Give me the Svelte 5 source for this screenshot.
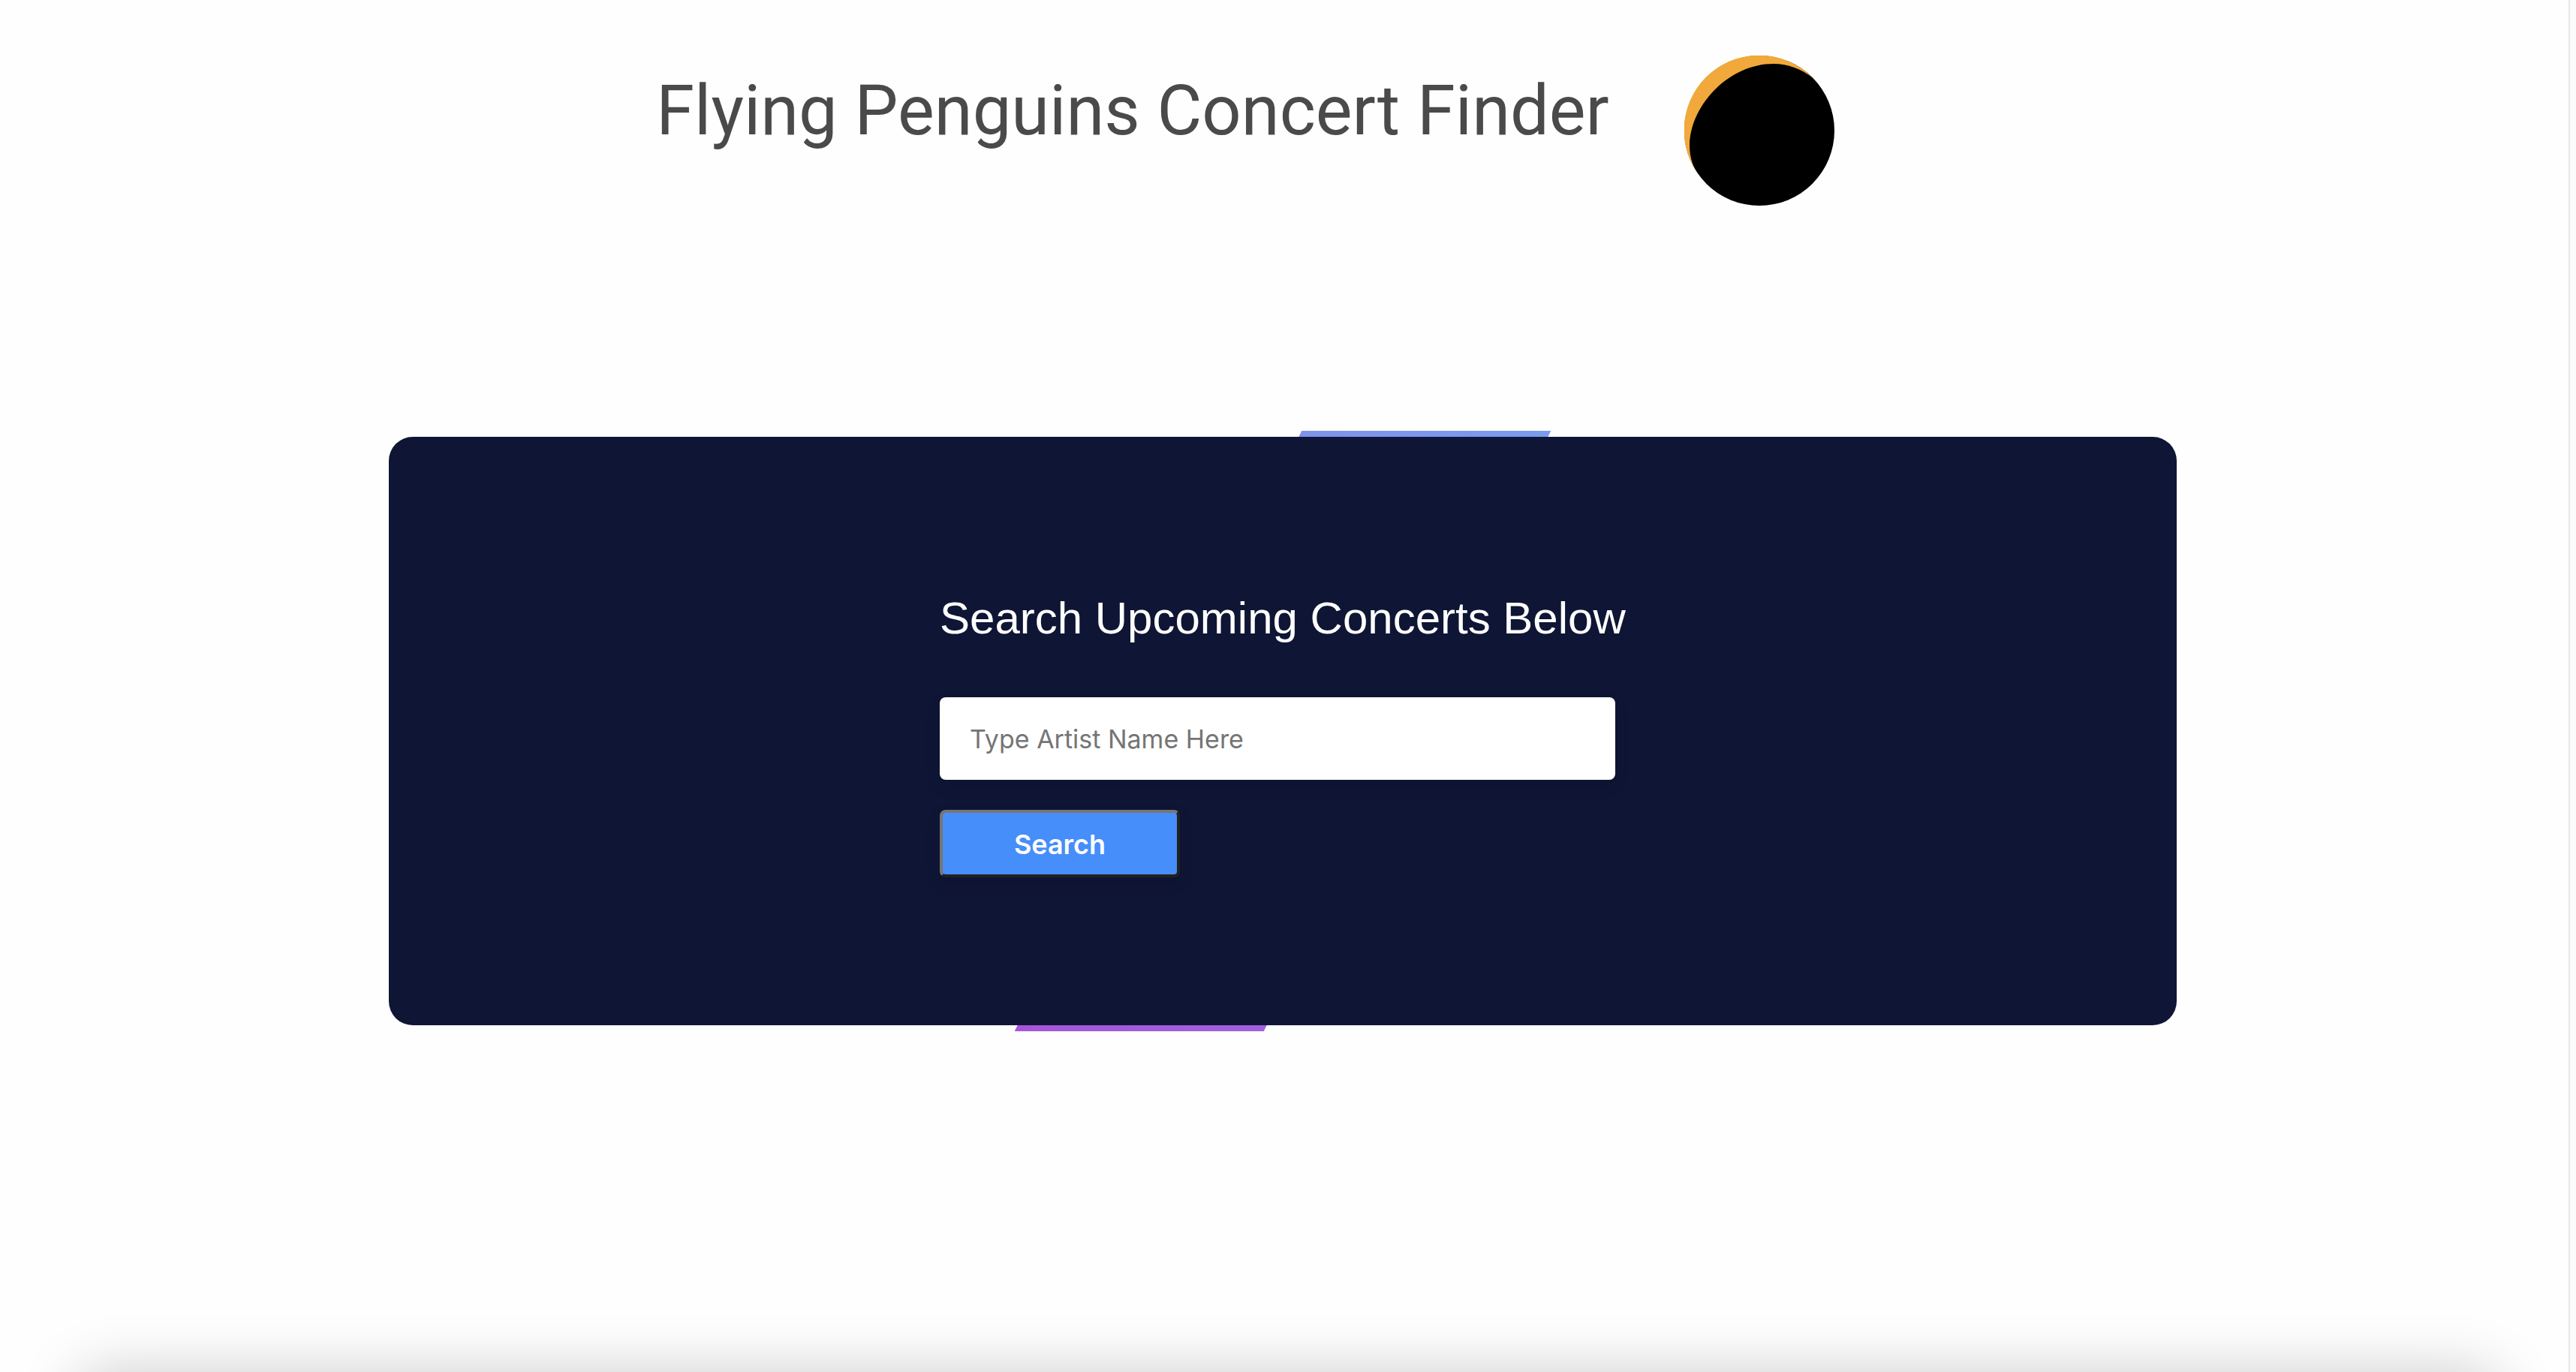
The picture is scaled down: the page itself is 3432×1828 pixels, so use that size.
<script>
  let artist = $state('');
</script>

<div class="page">
  <main>
    <header>
      <h1>Flying Penguins Concert Finder</h1>
      <svg class="eclipse" viewBox="0 0 200 200" aria-hidden="true">
        <circle cx="100" cy="100" r="100" fill="#000" />
        <path d="M17 156C10 145 7 132 7 120C7 68 58 11 119 11C138 11 156 18 171 29.6A100 100 0 0 0 17 156Z" fill="#f1a93b" />
      </svg>
    </header>

    <section class="card">
      <form onsubmit={(e) => e.preventDefault()}>
        <label for="artist">Search Upcoming Concerts Below</label>
        <input id="artist" type="text" placeholder="Type Artist Name Here" bind:value={artist} />
        <button type="submit">Search</button>
      </form>
    </section>
  </main>
  <div class="gutter"></div>
  <div class="shade"></div>
</div>

<style>
  :global(body) {
    background: #fefefe;
    overflow: hidden;
  }

  .page {
    position: relative;
    display: flex;
    min-height: 100vh;
    overflow: hidden;
    font-family: Inter, 'Liberation Sans', sans-serif;
  }

  main {
    flex: 1;
    display: flex;
    flex-direction: column;
    align-items: center;
    padding: 74px 4px 0 0;
  }

  .gutter {
    width: 8px;
    border-left: 2px solid #e8e8e8;
    background: #fafafa;
  }

  header {
    display: flex;
    align-items: flex-start;
    gap: 100px;
    padding-right: 100px;
  }

  h1 {
    margin: 18px 0 0;
    font-family: Roboto, sans-serif;
    font-size: 92px;
    line-height: 112px;
    font-weight: 400;
    color: #4a4a4a;
    white-space: nowrap;
  }

  .eclipse {
    width: 200px;
    height: 200px;
    flex: none;
  }

  .card {
    position: relative;
    box-sizing: border-box;
    display: flex;
    justify-content: center;
    width: 70%;
    max-width: 2382px;
    margin-top: 308px;
    padding: 202px 40px 197px;
    border-radius: 32px;
    background: #0f1535;
  }

  .card::before,
  .card::after {
    content: '';
    position: absolute;
    width: 336px;
    height: 8px;
    clip-path: polygon(4px 0, 100% 0, 332px 100%, 0 100%);
  }

  .card::before {
    right: 35%;
    bottom: 100%;
    background: linear-gradient(90deg, #8092ea, #7a9bee);
  }

  .card::after {
    left: 35%;
    top: 100%;
    background: linear-gradient(90deg, #a556da, #a061dd);
  }

  form {
    display: flex;
    flex-direction: column;
    align-items: flex-start;
    width: 914px;
  }

  label {
    font-family: 'Liberation Sans', Arial, sans-serif;
    font-size: 60px;
    line-height: 80px;
    color: #fff;
    white-space: nowrap;
  }

  input {
    box-sizing: border-box;
    width: 900px;
    height: 110px;
    margin: 65px 0 40px;
    padding: 0 40px;
    border: 0;
    border-radius: 8px;
    background: #fff;
    box-shadow: 0 8px 20px rgba(0, 0, 0, 0.12);
    font-family: inherit;
    font-size: 34px;
    color: #222;
  }

  input::placeholder {
    color: #757575;
    opacity: 1;
  }

  button {
    box-sizing: border-box;
    width: 320px;
    height: 90px;
    padding: 2px 0 0;
    border: 4px solid;
    border-color: #767676 #212121 #212121 #767676;
    border-radius: 8px;
    background: #468ef9;
    box-shadow: 0 8px 20px rgba(0, 0, 0, 0.12);
    font-family: inherit;
    font-size: 36px;
    font-weight: 600;
    color: #fff;
  }

  /* Soft shadow rising from below the fold */
  .shade {
    position: absolute;
    top: 100%;
    left: 100px;
    right: 100px;
    height: 100px;
    border-radius: 40px;
    box-shadow: 0 0 80px rgba(0, 0, 0, 0.2);
  }
</style>
